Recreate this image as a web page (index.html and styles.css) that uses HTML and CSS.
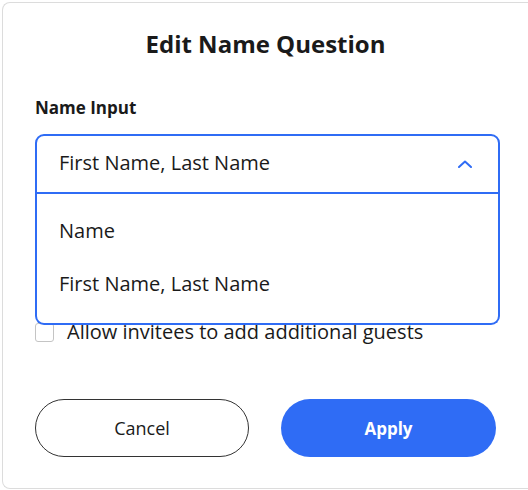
FILE: index.html
```html
<!DOCTYPE html>
<html lang="en">
<head>
<meta charset="utf-8">
<title>Edit Name Question</title>
<link rel="stylesheet" href="styles.css">
</head>
<body>
<div class="modal">
  <h1 class="title">Edit Name Question</h1>
  <div class="field">
    <div class="label">Name Input</div>
    <div class="select">
      <div class="select-head">
        <span class="select-value">First Name, Last Name</span>
        <svg class="chevron" width="14" height="8" viewBox="0 0 14 8" aria-hidden="true"><path d="M1 7 L7 1.5 L13 7" fill="none" stroke="#2f6cf5" stroke-width="2" stroke-linecap="round" stroke-linejoin="round"/></svg>
      </div>
      <ul class="select-menu">
        <li class="option">Name</li>
        <li class="option">First Name, Last Name</li>
      </ul>
    </div>
  </div>
  <label class="check-row">
    <span class="checkbox"></span>
    <span class="check-text">Allow invitees to add additional guests</span>
  </label>
  <div class="actions">
    <button class="btn btn-cancel">Cancel</button>
    <button class="btn btn-apply">Apply</button>
  </div>
</div>
</body>
</html>
```
FILE: styles.css
```css
html, body {
  margin: 0;
  padding: 0;
  background: #ffffff;
}
body {
  font-family: "Open Sans", "Liberation Sans", sans-serif;
  color: #1a1a1a;
  padding: 2px 0 0 2px;
}
.modal {
  box-sizing: border-box;
  width: 526px;
  height: 487px;
  background: #fff;
  border: 1px solid #dcdcdc;
  border-right: 0;
  border-radius: 8px 0 0 8px;
  padding: 25px 28px 31px 32px;
}
.title {
  margin: 0;
  font-size: 24px;
  line-height: 32px;
  font-weight: 700;
  text-align: center;
  padding-right: 4px;
  color: #1a1a1a;
}
.field {
  margin-top: 36px;
}
.label {
  font-size: 17px;
  line-height: 24px;
  font-weight: 700;
  margin-bottom: 14px;
}
.select {
  position: relative;
}
.select-head {
  box-sizing: border-box;
  height: 60px;
  border: 2px solid #2f6cf5;
  border-radius: 9px 9px 0 0;
  padding: 0 26px 2px 22px;
  display: flex;
  align-items: center;
  justify-content: space-between;
}
.select-value {
  font-size: 20px;
  line-height: 28px;
}
.chevron {
  display: block;
  margin-top: 1px;
}
.select-menu {
  position: absolute;
  top: 100%;
  left: 0;
  right: 0;
  margin: 0;
  list-style: none;
  background: #fff;
  border: 2px solid #2f6cf5;
  border-top: 0;
  border-radius: 0 0 9px 9px;
  padding: 10px 0 13px 0;
  z-index: 2;
}
.option {
  font-size: 20px;
  line-height: 28px;
  padding: 13px 22px 12px 22px;
}
.check-row {
  margin-top: 124px;
  display: flex;
  align-items: center;
  gap: 13px;
}
.checkbox {
  box-sizing: border-box;
  width: 19px;
  height: 19px;
  border: 1px solid #c4c4c4;
  border-radius: 3px;
  background: #fff;
}
.check-text {
  font-size: 20px;
  line-height: 28px;
}
.actions {
  margin-top: 53px;
  display: grid;
  grid-template-columns: 214px 215px;
  gap: 32px;
}
.btn {
  height: 58px;
  border-radius: 29px;
  font-family: "Open Sans", "Liberation Sans", sans-serif;
  cursor: pointer;
}
.btn-cancel {
  background: #fff;
  border: 1px solid #333;
  color: #1a1a1a;
  font-size: 18px;
  font-weight: 400;
}
.btn-apply {
  background: #2f6cf5;
  border: 0;
  color: #fff;
  font-size: 17px;
  font-weight: 700;
}
```
